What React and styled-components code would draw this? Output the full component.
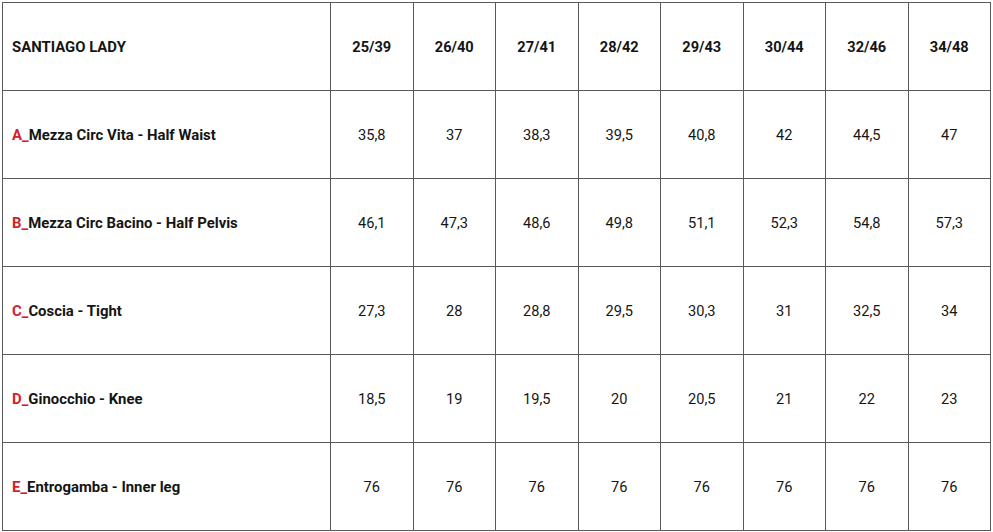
import React from "react";
import styled, { createGlobalStyle } from "styled-components";

const Global = createGlobalStyle`
  html, body { margin: 0; padding: 0; background: #fff; }
  body { font-family: Roboto, "Liberation Sans", sans-serif; color: #111; }
`;

const Wrap = styled.div`
  padding: 2px 0 0 2px;
`;

const Table = styled.table`
  border-collapse: collapse;
  table-layout: fixed;
  width: 988px;
  font-size: 14.6px;
`;

const Cell = styled.td`
  height: 87px;
  padding: 0;
  border: 1px solid #5a5a5a;
  text-align: ${(p) => (p.$label ? "left" : "center")};
  padding-left: ${(p) => (p.$label ? "9px" : "0")};
  font-weight: ${(p) => (p.$bold ? 700 : 400)};
  font-size: ${(p) => (p.$label ? "14.9px" : "14.6px")};
  vertical-align: middle;
  color: #151515;
`;

const Letter = styled.span`
  color: #d3212b;
`;

const sizes = ["25/39", "26/40", "27/41", "28/42", "29/43", "30/44", "32/46", "34/48"];

const rows = [
  ["A", "Mezza Circ Vita - Half Waist", ["35,8", "37", "38,3", "39,5", "40,8", "42", "44,5", "47"]],
  ["B", "Mezza Circ Bacino - Half Pelvis", ["46,1", "47,3", "48,6", "49,8", "51,1", "52,3", "54,8", "57,3"]],
  ["C", "Coscia - Tight", ["27,3", "28", "28,8", "29,5", "30,3", "31", "32,5", "34"]],
  ["D", "Ginocchio - Knee", ["18,5", "19", "19,5", "20", "20,5", "21", "22", "23"]],
  ["E", "Entrogamba - Inner leg", ["76", "76", "76", "76", "76", "76", "76", "76"]],
];

export default function App() {
  return (
    <Wrap>
      <Global />
      <Table>
        <colgroup>
          <col style={{ width: 328 }} />
          {sizes.map((s) => (
            <col key={s} style={{ width: 82.5 }} />
          ))}
        </colgroup>
        <tbody>
          <tr>
            <Cell $label $bold>SANTIAGO LADY</Cell>
            {sizes.map((s) => (
              <Cell key={s} $bold>{s}</Cell>
            ))}
          </tr>
          {rows.map(([l, name, vals]) => (
            <tr key={l}>
              <Cell $label $bold>
                <Letter>{l}_</Letter>
                {name}
              </Cell>
              {vals.map((v, i) => (
                <Cell key={i}>{v}</Cell>
              ))}
            </tr>
          ))}
        </tbody>
      </Table>
    </Wrap>
  );
}
